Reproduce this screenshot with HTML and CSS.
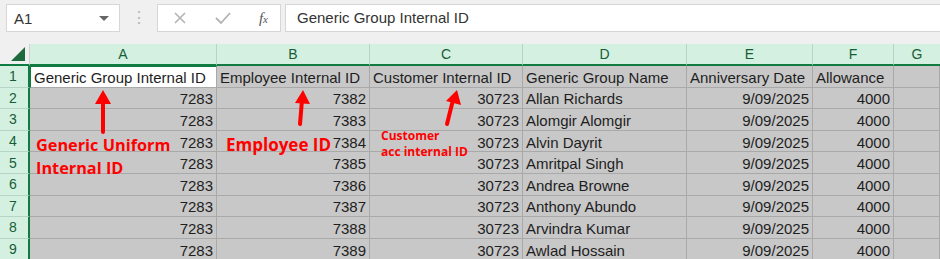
FILE: index.html
```html
<!DOCTYPE html>
<html>
<head>
<meta charset="utf-8">
<link rel="stylesheet" href="styles.css">
</head>
<body>
<div class="app">
  <div class="toolbar">
    <div class="namebox"><span>A1</span><span class="caret"></span></div>
    <div class="dots">⋮</div>
    <div class="fxbox">
      <svg class="ico" width="16" height="16" viewBox="0 0 16 16"><path d="M3 3 L13 13 M13 3 L3 13" stroke="#b3b3b3" stroke-width="1.6" fill="none"/></svg>
      <svg class="ico" width="18" height="16" viewBox="0 0 18 16"><path d="M2 8 L7 13 L16 3" stroke="#b3b3b3" stroke-width="1.8" fill="none"/></svg>
      <span class="fx"><i>f</i><span class="x">x</span></span>
    </div>
    <div class="formula">Generic Group Internal ID</div>
  </div>
  <div class="sheet">
    <div class="grid">
      <div class="corner"><span class="tri"></span></div>
      <div class="ch">A</div><div class="ch">B</div><div class="ch">C</div><div class="ch">D</div><div class="ch">E</div><div class="ch">F</div><div class="ch last">G</div>

      <div class="rh">1</div>
      <div class="c active">Generic Group Internal ID</div><div class="c">Employee Internal ID</div><div class="c">Customer Internal ID</div><div class="c">Generic Group Name</div><div class="c">Anniversary Date</div><div class="c">Allowance</div><div class="c last"></div>

      <div class="rh">2</div>
      <div class="c n">7283</div><div class="c n">7382</div><div class="c n">30723</div><div class="c">Allan Richards</div><div class="c n">9/09/2025</div><div class="c n">4000</div><div class="c last"></div>

      <div class="rh">3</div>
      <div class="c n">7283</div><div class="c n">7383</div><div class="c n">30723</div><div class="c">Alomgir Alomgir</div><div class="c n">9/09/2025</div><div class="c n">4000</div><div class="c last"></div>

      <div class="rh">4</div>
      <div class="c n">7283</div><div class="c n">7384</div><div class="c n">30723</div><div class="c">Alvin Dayrit</div><div class="c n">9/09/2025</div><div class="c n">4000</div><div class="c last"></div>

      <div class="rh">5</div>
      <div class="c n">7283</div><div class="c n">7385</div><div class="c n">30723</div><div class="c">Amritpal Singh</div><div class="c n">9/09/2025</div><div class="c n">4000</div><div class="c last"></div>

      <div class="rh">6</div>
      <div class="c n">7283</div><div class="c n">7386</div><div class="c n">30723</div><div class="c">Andrea Browne</div><div class="c n">9/09/2025</div><div class="c n">4000</div><div class="c last"></div>

      <div class="rh">7</div>
      <div class="c n">7283</div><div class="c n">7387</div><div class="c n">30723</div><div class="c">Anthony Abundo</div><div class="c n">9/09/2025</div><div class="c n">4000</div><div class="c last"></div>

      <div class="rh">8</div>
      <div class="c n">7283</div><div class="c n">7388</div><div class="c n">30723</div><div class="c">Arvindra Kumar</div><div class="c n">9/09/2025</div><div class="c n">4000</div><div class="c last"></div>

      <div class="rh">9</div>
      <div class="c n">7283</div><div class="c n">7389</div><div class="c n">30723</div><div class="c">Awlad Hossain</div><div class="c n">9/09/2025</div><div class="c n">4000</div><div class="c last"></div>
    </div>

    <svg class="arrows" width="940" height="259" viewBox="0 0 940 259">
      <g fill="#ff0000" stroke="#ff0000" stroke-linecap="round">
        <line x1="103" y1="132" x2="103" y2="100" stroke-width="4"/>
        <polygon points="103,90 95,104 111,104" stroke="none"/>
        <line x1="300" y1="124" x2="302" y2="100" stroke-width="4"/>
        <polygon points="303,90 295,103 310,104" stroke="none"/>
        <line x1="447" y1="124" x2="453" y2="100" stroke-width="4"/>
        <polygon points="457,90 446,101 461,105" stroke="none"/>
      </g>
    </svg>
    <div class="note note1">Generic Uniform<br>Internal ID</div>
    <div class="note note2">Employee ID</div>
    <div class="note note3">Customer<br>acc internal ID</div>
  </div>
</div>
</body>
</html>
```

FILE: styles.css
```css
html, body {
  margin: 0;
  padding: 0;
}
body {
  width: 940px;
  height: 259px;
  overflow: hidden;
  background: #c8c8c8;
  font-family: "Liberation Sans", Arial, sans-serif;
}
.app {
  display: flex;
  flex-direction: column;
  width: 940px;
  height: 259px;
}
.toolbar {
  height: 44px;
  box-sizing: border-box;
  background: #f0f0f0;
  display: flex;
  align-items: flex-start;
  padding: 4px 0 0 6px;
  gap: 0;
}
.namebox {
  width: 114px;
  height: 28px;
  box-sizing: border-box;
  background: #fff;
  border: 1px solid #d6d6d6;
  display: flex;
  align-items: center;
  justify-content: space-between;
  padding: 0 10px 0 7px;
  font-size: 15px;
  color: #333;
}
.caret {
  width: 0;
  height: 0;
  border-left: 5px solid transparent;
  border-right: 5px solid transparent;
  border-top: 5px solid #666;
}
.dots {
  width: 37px;
  text-align: center;
  color: #b5b5b5;
  font-size: 16px;
  line-height: 28px;
}
.fxbox {
  width: 124px;
  height: 28px;
  box-sizing: border-box;
  background: #fff;
  border: 1px solid #d6d6d6;
  display: flex;
  align-items: center;
  justify-content: space-between;
  padding: 0 12px 0 14px;
}
.fx {
  font-family: "Liberation Serif", serif;
  font-size: 15px;
  color: #555;
  font-style: italic;
}
.fx .x {
  font-size: 11px;
}
.formula {
  margin-left: 4px;
  flex: 1;
  height: 28px;
  box-sizing: border-box;
  background: #fff;
  border: 1px solid #d6d6d6;
  border-right: none;
  font-size: 15px;
  line-height: 26px;
  padding-left: 11px;
  color: #333;
}
.sheet {
  position: relative;
  flex: 1;
  overflow: hidden;
}
.grid {
  display: grid;
  grid-template-columns: 30px 187px 153px 153px 164px 126px 81px 1fr;
  grid-template-rows: 22px;
  grid-auto-rows: 21.6px;
}
.corner {
  background: #f0f0f0;
  border-bottom: 2px solid #107c41;
  box-sizing: border-box;
  position: relative;
  border-right: 1px solid #d0d0d0;
}
.tri {
  position: absolute;
  right: 4px;
  bottom: 3px;
  width: 0;
  height: 0;
  border-left: 14px solid transparent;
  border-bottom: 14px solid #1d6b3c;
}
.ch {
  background: #d3f0e0;
  color: #185c37;
  font-size: 14px;
  text-align: center;
  line-height: 21px;
  border-right: 1px solid #b8d4c4;
  border-bottom: 2px solid #107c41;
  box-sizing: border-box;
}
.ch.last {
  border-right: none;
}
.rh {
  background: #d3f0e0;
  color: #185c37;
  font-size: 14px;
  text-align: center;
  border-bottom: 1px solid #b8d4c4;
  border-right: 2px solid #107c41;
  box-sizing: border-box;
  display: flex;
  align-items: center;
  justify-content: center;
  padding-right: 2px;
}
.c {
  background: #c8c8c8;
  color: #1e1e1e;
  font-size: 15px;
  border-right: 1px solid #a9a9a9;
  border-bottom: 1px solid #a9a9a9;
  box-sizing: border-box;
  display: flex;
  align-items: center;
  padding: 2px 3px 0 3px;
  white-space: nowrap;
  overflow: hidden;
}
.c.n {
  justify-content: flex-end;
}
.c.active {
  background: #fff;
  border-top: 1px solid #107c41;
  border-left: 1px solid #107c41;
}
.arrows {
  position: absolute;
  left: 0;
  top: -44px;
  pointer-events: none;
}
.note {
  position: absolute;
  color: #ff0000;
  font-family: "Open Sans", sans-serif;
  font-weight: 700;
  white-space: nowrap;
}
.note1 {
  left: 36px;
  top: 90px;
  font-size: 16.3px;
  line-height: 23px;
}
.note2 {
  left: 226px;
  top: 89px;
  font-size: 17px;
  line-height: 23px;
}
.note3 {
  left: 381px;
  top: 84px;
  font-size: 12px;
  line-height: 16px;
}
```
